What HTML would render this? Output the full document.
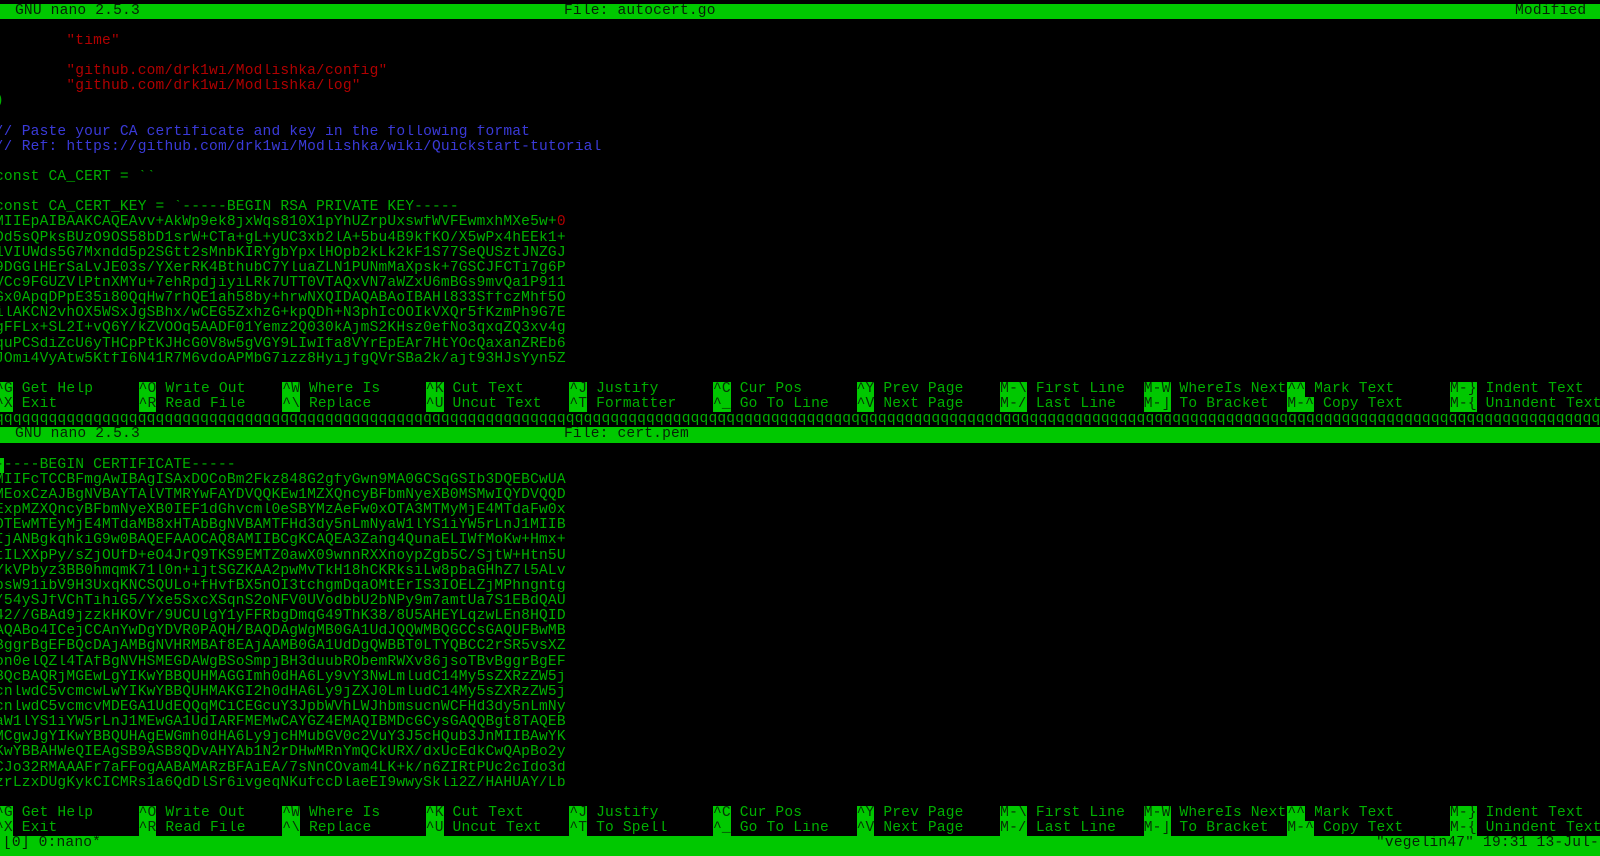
<!DOCTYPE html>
<html><head><meta charset="utf-8"><style>
html,body{margin:0;padding:0;background:#000;width:1600px;height:851px;overflow:hidden}
#t{position:absolute;left:-5px;top:3.5px;width:1620px;font-family:"Liberation Mono",monospace;font-size:14.58px;letter-spacing:0.17px;color:#00b000}
.r{height:15.15px;line-height:15.15px;white-space:pre;overflow:hidden;position:relative;width:1620px}
.bar{background:#00c800;color:#062006}
.bar span{position:absolute;top:0}
.red{color:#b00000}.blu{color:#3a3ad8}
.i{display:inline-block;width:143.6px;white-space:pre}
.l{position:absolute;left:1455px;top:0}
.k{background:#00c800;color:#063006}
</style></head><body><div id="t">
<div class="r bar"><span style="left:20px">GNU nano 2.5.3</span><span style="left:569px">File: autocert.go</span><span style="left:1520px">Modified</span></div>
<div class="r"></div>
<div class="r">        <span class="red">"time"</span></div>
<div class="r"></div>
<div class="r">        <span class="red">"github.com/drk1wi/Modlishka/config"</span></div>
<div class="r">        <span class="red">"github.com/drk1wi/Modlishka/log"</span></div>
<div class="r">)</div>
<div class="r"></div>
<div class="r blu">// Paste your CA certificate and key in the following format</div>
<div class="r blu">// Ref: https://github.com/drk1wi/Modlishka/wiki/Quickstart-tutorial</div>
<div class="r"></div>
<div class="r">const CA_CERT = ``</div>
<div class="r"></div>
<div class="r">const CA_CERT_KEY = `-----BEGIN RSA PRIVATE KEY-----</div>
<div class="r">MIIEpAIBAAKCAQEAvv+AkWp9ek8jxWqs810X1pYhUZrpUxswfWVFEwmxhMXe5w+<span class="red">0</span></div>
<div class="r">Od5sQPksBUzO9OS58bD1srW+CTa+gL+yUC3xb2lA+5bu4B9kfKO/X5wPx4hEEk1+</div>
<div class="r">1VIUWds5G7Mxndd5p2SGtt2sMnbKIRYgbYpxlHOpb2kLk2kF1S77SeQUSztJNZGJ</div>
<div class="r">9DGGlHErSaLvJE03s/YXerRK4BthubC7YluaZLN1PUNmMaXpsk+7GSCJFCTi7g6P</div>
<div class="r">VCc9FGUZVlPtnXMYu+7ehRpdjiyiLRk7UTT0VTAQxVN7aWZxU6mBGs9mvQa1P911</div>
<div class="r">Gx0ApqDPpE35i80QqHw7rhQE1ah58by+hrwNXQIDAQABAoIBAHl833SffczMhf5O</div>
<div class="r">ilAKCN2vhOX5WSxJgSBhx/wCEG5ZxhzG+kpQDh+N3phIcOOIkVXQr5fKzmPh9G7E</div>
<div class="r">gFFLx+SL2I+vQ6Y/kZVOOq5AADF01Yemz2Q030kAjmS2KHsz0efNo3qxqZQ3xv4g</div>
<div class="r">quPCSdiZcU6yTHCpPtKJHcG0V8w5gVGY9LIwIfa8VYrEpEAr7HtYOcQaxanZREb6</div>
<div class="r">JOmi4VyAtw5KtfI6N41R7M6vdoAPMbG7izz8HyijfgQVrSBa2k/ajt93HJsYyn5Z</div>
<div class="r"></div>
<div class="r"><span class="i"><span class="k">^G</span> Get Help</span><span class="i"><span class="k">^O</span> Write Out</span><span class="i"><span class="k">^W</span> Where Is</span><span class="i"><span class="k">^K</span> Cut Text</span><span class="i"><span class="k">^J</span> Justify</span><span class="i"><span class="k">^C</span> Cur Pos</span><span class="i"><span class="k">^Y</span> Prev Page</span><span class="i"><span class="k">M-\</span> First Line</span><span class="i"><span class="k">M-W</span> WhereIs Next</span><span class="i"><span class="k">^^</span> Mark Text</span><span class="l"><span class="k">M-}</span> Indent Text</span></div>
<div class="r"><span class="i"><span class="k">^X</span> Exit</span><span class="i"><span class="k">^R</span> Read File</span><span class="i"><span class="k">^\</span> Replace</span><span class="i"><span class="k">^U</span> Uncut Text</span><span class="i"><span class="k">^T</span> Formatter</span><span class="i"><span class="k">^_</span> Go To Line</span><span class="i"><span class="k">^V</span> Next Page</span><span class="i"><span class="k">M-/</span> Last Line</span><span class="i"><span class="k">M-]</span> To Bracket</span><span class="i"><span class="k">M-^</span> Copy Text</span><span class="l"><span class="k">M-{</span> Unindent Text</span></div>
<div class="r">qqqqqqqqqqqqqqqqqqqqqqqqqqqqqqqqqqqqqqqqqqqqqqqqqqqqqqqqqqqqqqqqqqqqqqqqqqqqqqqqqqqqqqqqqqqqqqqqqqqqqqqqqqqqqqqqqqqqqqqqqqqqqqqqqqqqqqqqqqqqqqqqqqqqqqqqqqqqqqqqqqqqqqqqqqqqqqqqqqqqqqqqq</div>
<div class="r bar"><span style="left:20px">GNU nano 2.5.3</span><span style="left:569px">File: cert.pem</span></div>
<div class="r"></div>
<div class="r"><span class="k">-</span>----BEGIN CERTIFICATE-----</div>
<div class="r">MIIFcTCCBFmgAwIBAgISAxDOCoBm2Fkz848G2gfyGwn9MA0GCSqGSIb3DQEBCwUA</div>
<div class="r">MEoxCzAJBgNVBAYTAlVTMRYwFAYDVQQKEw1MZXQncyBFbmNyeXB0MSMwIQYDVQQD</div>
<div class="r">ExpMZXQncyBFbmNyeXB0IEF1dGhvcml0eSBYMzAeFw0xOTA3MTMyMjE4MTdaFw0x</div>
<div class="r">OTEwMTEyMjE4MTdaMB8xHTAbBgNVBAMTFHd3dy5nLmNyaW1lYS1iYW5rLnJ1MIIB</div>
<div class="r">IjANBgkqhkiG9w0BAQEFAAOCAQ8AMIIBCgKCAQEA3Zang4QunaELIWfMoKw+Hmx+</div>
<div class="r">tILXXpPy/sZjOUfD+eO4JrQ9TKS9EMTZ0awX09wnnRXXnoypZgb5C/SjtW+Htn5U</div>
<div class="r">YkVPbyz3BB0hmqmK71l0n+ijtSGZKAA2pwMvTkH18hCKRksiLw8pbaGHhZ7l5ALv</div>
<div class="r">psW91ibV9H3UxqKNCSQULo+fHvfBX5nOI3tchgmDqaOMtErIS3IOELZjMPhngntg</div>
<div class="r">/54ySJfVChTihiG5/Yxe5SxcXSqnS2oNFV0UVodbbU2bNPy9m7amtUa7S1EBdQAU</div>
<div class="r">42//GBAd9jzzkHKOVr/9UCUlgY1yFFRbgDmqG49ThK38/8U5AHEYLqzwLEn8HQID</div>
<div class="r">AQABo4ICejCCAnYwDgYDVR0PAQH/BAQDAgWgMB0GA1UdJQQWMBQGCCsGAQUFBwMB</div>
<div class="r">BggrBgEFBQcDAjAMBgNVHRMBAf8EAjAAMB0GA1UdDgQWBBT0LTYQBCC2rSR5vsXZ</div>
<div class="r">on0elQZl4TAfBgNVHSMEGDAWgBSoSmpjBH3duubRObemRWXv86jsoTBvBggrBgEF</div>
<div class="r">BQcBAQRjMGEwLgYIKwYBBQUHMAGGImh0dHA6Ly9vY3NwLmludC14My5sZXRzZW5j</div>
<div class="r">cnlwdC5vcmcwLwYIKwYBBQUHMAKGI2h0dHA6Ly9jZXJ0LmludC14My5sZXRzZW5j</div>
<div class="r">cnlwdC5vcmcvMDEGA1UdEQQqMCiCEGcuY3JpbWVhLWJhbmsucnWCFHd3dy5nLmNy</div>
<div class="r">aW1lYS1iYW5rLnJ1MEwGA1UdIARFMEMwCAYGZ4EMAQIBMDcGCysGAQQBgt8TAQEB</div>
<div class="r">MCgwJgYIKwYBBQUHAgEWGmh0dHA6Ly9jcHMubGV0c2VuY3J5cHQub3JnMIIBAwYK</div>
<div class="r">KwYBBAHWeQIEAgSB9ASB8QDvAHYAb1N2rDHwMRnYmQCkURX/dxUcEdkCwQApBo2y</div>
<div class="r">CJo32RMAAAFr7aFFogAABAMARzBFAiEA/7sNnCOvam4LK+k/n6ZIRtPUc2cIdo3d</div>
<div class="r">zrLzxDUgKykCICMRs1a6QdDlSr6ivgeqNKufccDlaeEI9wwySkli2Z/HAHUAY/Lb</div>
<div class="r"></div>
<div class="r"><span class="i"><span class="k">^G</span> Get Help</span><span class="i"><span class="k">^O</span> Write Out</span><span class="i"><span class="k">^W</span> Where Is</span><span class="i"><span class="k">^K</span> Cut Text</span><span class="i"><span class="k">^J</span> Justify</span><span class="i"><span class="k">^C</span> Cur Pos</span><span class="i"><span class="k">^Y</span> Prev Page</span><span class="i"><span class="k">M-\</span> First Line</span><span class="i"><span class="k">M-W</span> WhereIs Next</span><span class="i"><span class="k">^^</span> Mark Text</span><span class="l"><span class="k">M-}</span> Indent Text</span></div>
<div class="r"><span class="i"><span class="k">^X</span> Exit</span><span class="i"><span class="k">^R</span> Read File</span><span class="i"><span class="k">^\</span> Replace</span><span class="i"><span class="k">^U</span> Uncut Text</span><span class="i"><span class="k">^T</span> To Spell</span><span class="i"><span class="k">^_</span> Go To Line</span><span class="i"><span class="k">^V</span> Next Page</span><span class="i"><span class="k">M-/</span> Last Line</span><span class="i"><span class="k">M-]</span> To Bracket</span><span class="i"><span class="k">M-^</span> Copy Text</span><span class="l"><span class="k">M-{</span> Unindent Text</span></div>
<div class="r bar" style="height:20px"><span style="left:8px">[0] 0:nano*</span><span style="left:1381px">"vegelin47" 19:31 13-Jul-19</span></div>
</div></body></html>
